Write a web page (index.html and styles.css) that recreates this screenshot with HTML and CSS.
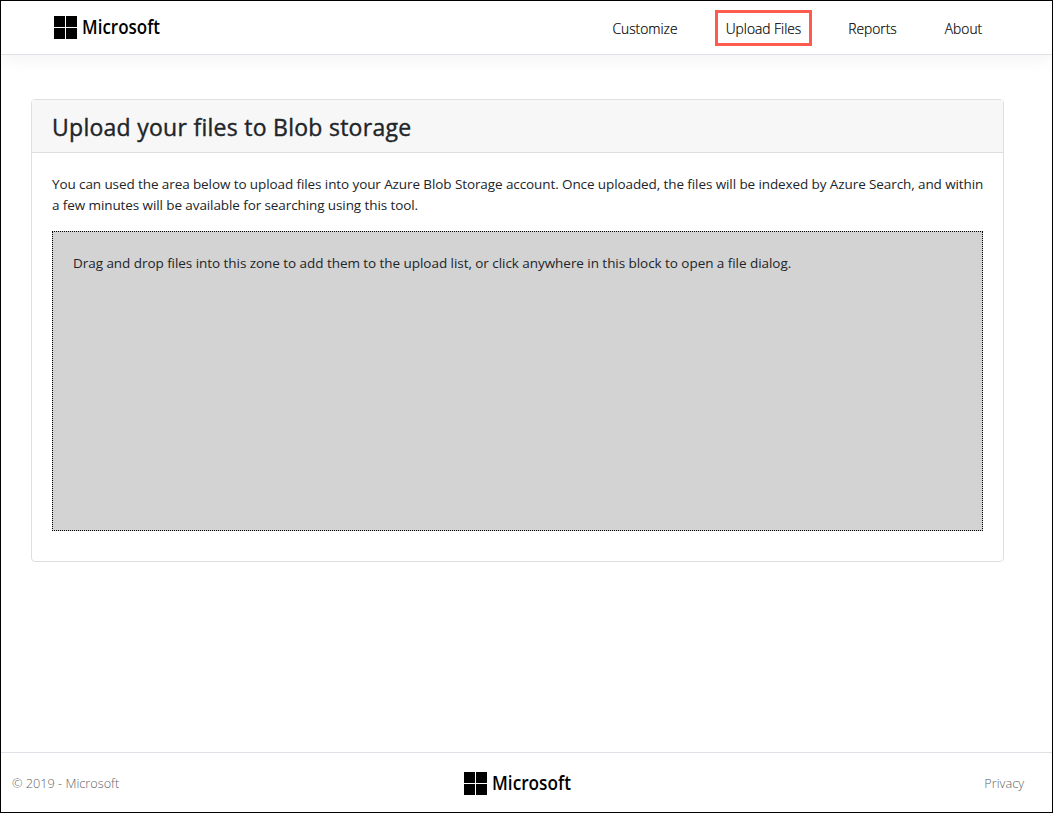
FILE: index.html
```html
<!DOCTYPE html>
<html lang="en">
<head>
<meta charset="utf-8">
<title>Upload Files</title>
<link rel="stylesheet" href="styles.css">
</head>
<body>
<div class="page">
  <header class="navbar">
    <svg class="logo" width="109" height="24" viewBox="0 0 109 24" role="img" aria-label="Microsoft">
      <path d="M0 0h11v11H0zM12 0h11v11H12zM0 12h11v11H0zM12 12h11v11H12z"/>
      <text class="logo-text" x="28" y="18" textLength="78" lengthAdjust="spacingAndGlyphs">Microsoft</text>
    </svg>
    <nav class="links">
      <a class="link customize">Customize</a>
      <a class="link upload">Upload Files</a>
      <a class="link reports">Reports</a>
      <a class="link about">About</a>
    </nav>
  </header>
  <main class="main">
    <section class="card">
      <h1 class="card-header"><span class="title">Upload your files to Blob storage</span></h1>
      <div class="card-body">
        <p class="intro"><span class="line-one">You can used the area below to upload files into your Azure Blob Storage account. Once uploaded, the files will be indexed by Azure Search, and within</span><br><span class="line-two">a few minutes will be available for searching using this tool.</span></p>
        <div class="dropzone"><span class="hint">Drag and drop files into this zone to add them to the upload list, or click anywhere in this block to open a file dialog.</span></div>
      </div>
    </section>
  </main>
  <footer class="footer">
    <span class="copyright">© 2019 - Microsoft</span>
    <svg class="logo" width="109" height="24" viewBox="0 0 109 24" role="img" aria-label="Microsoft">
      <path d="M0 0h11v11H0zM12 0h11v11H12zM0 12h11v11H0zM12 12h11v11H12z"/>
      <text class="logo-text" x="28" y="18" textLength="79" lengthAdjust="spacingAndGlyphs">Microsoft</text>
    </svg>
    <a class="privacy">Privacy</a>
  </footer>
</div>
</body>
</html>
```
FILE: styles.css
```css
* { box-sizing: border-box; }
body {
  margin: 0;
  font-family: "Open Sans", "Noto Sans", sans-serif;
  font-size: 13.5px;
  line-height: 21px;
  color: #212529;
  background: #fff;
}
.page {
  display: flex;
  flex-direction: column;
  height: 813px;
  border: 1px solid #000;
  overflow: hidden;
}
.navbar {
  display: flex;
  justify-content: space-between;
  flex: none;
  height: 54px;
  padding: 15px 49px 0 53px;
  border-bottom: 1px solid #dee2e6;
  box-shadow: 0 6px 14px rgba(0, 0, 0, .045);
}
.logo { display: block; flex: none; fill: #000; overflow: visible; }
.logo-text {
  font: 600 19px "Open Sans", sans-serif;
}
.links {
  display: flex;
  align-items: center;
  height: 36px;
  margin-top: -6px;
}
.link {
  display: flex;
  align-items: center;
  justify-content: center;
  height: 36px;
  border: 3px solid transparent;
  color: #000;
  font-size: 13.8px;
  font-weight: 300;
  -webkit-text-stroke: .2px #000;
  white-space: nowrap;
}
.customize { width: 90px; margin-right: 25px; }
.upload { width: 97px; border-color: #fc5b4e; margin-right: 24px; }
.reports { width: 73px; margin-right: 23px; }
.about { width: 63px; margin-right: 8px; }
.main { flex: 1; padding: 44px 48px 0 30px; }
.card {
  height: 463px;
  border: 1px solid #dfdfdf;
  border-radius: 4px;
}
.card-header {
  height: 53px;
  margin: 0;
  padding: 12px 20px 0;
  border-bottom: 1px solid #dfdfdf;
  background: #f7f7f7;
  font-size: 23px;
  font-weight: 500;
  line-height: 30px;
  letter-spacing: .27px;
  -webkit-text-stroke: .4px #212529;
  white-space: nowrap;
}
.card-body { padding: 21px 20px 30px; white-space: nowrap; }
.intro { margin: 0 0 15px; letter-spacing: -.096px; }
.dropzone {
  height: 300px;
  padding: 21px 20px;
  border: 1px dotted #000;
  background: #d3d3d3;
  letter-spacing: -.052px;
}
.footer {
  display: grid;
  grid-template-columns: 1fr 109px 1fr;
  align-items: center;
  flex: none;
  height: 60px;
  padding: 2px 28px 0 11px;
  border-top: 1px solid #dee2e6;
  color: #606468;
  font-size: 12.7px;
  font-weight: 300;
}
.privacy { justify-self: end; }
```
